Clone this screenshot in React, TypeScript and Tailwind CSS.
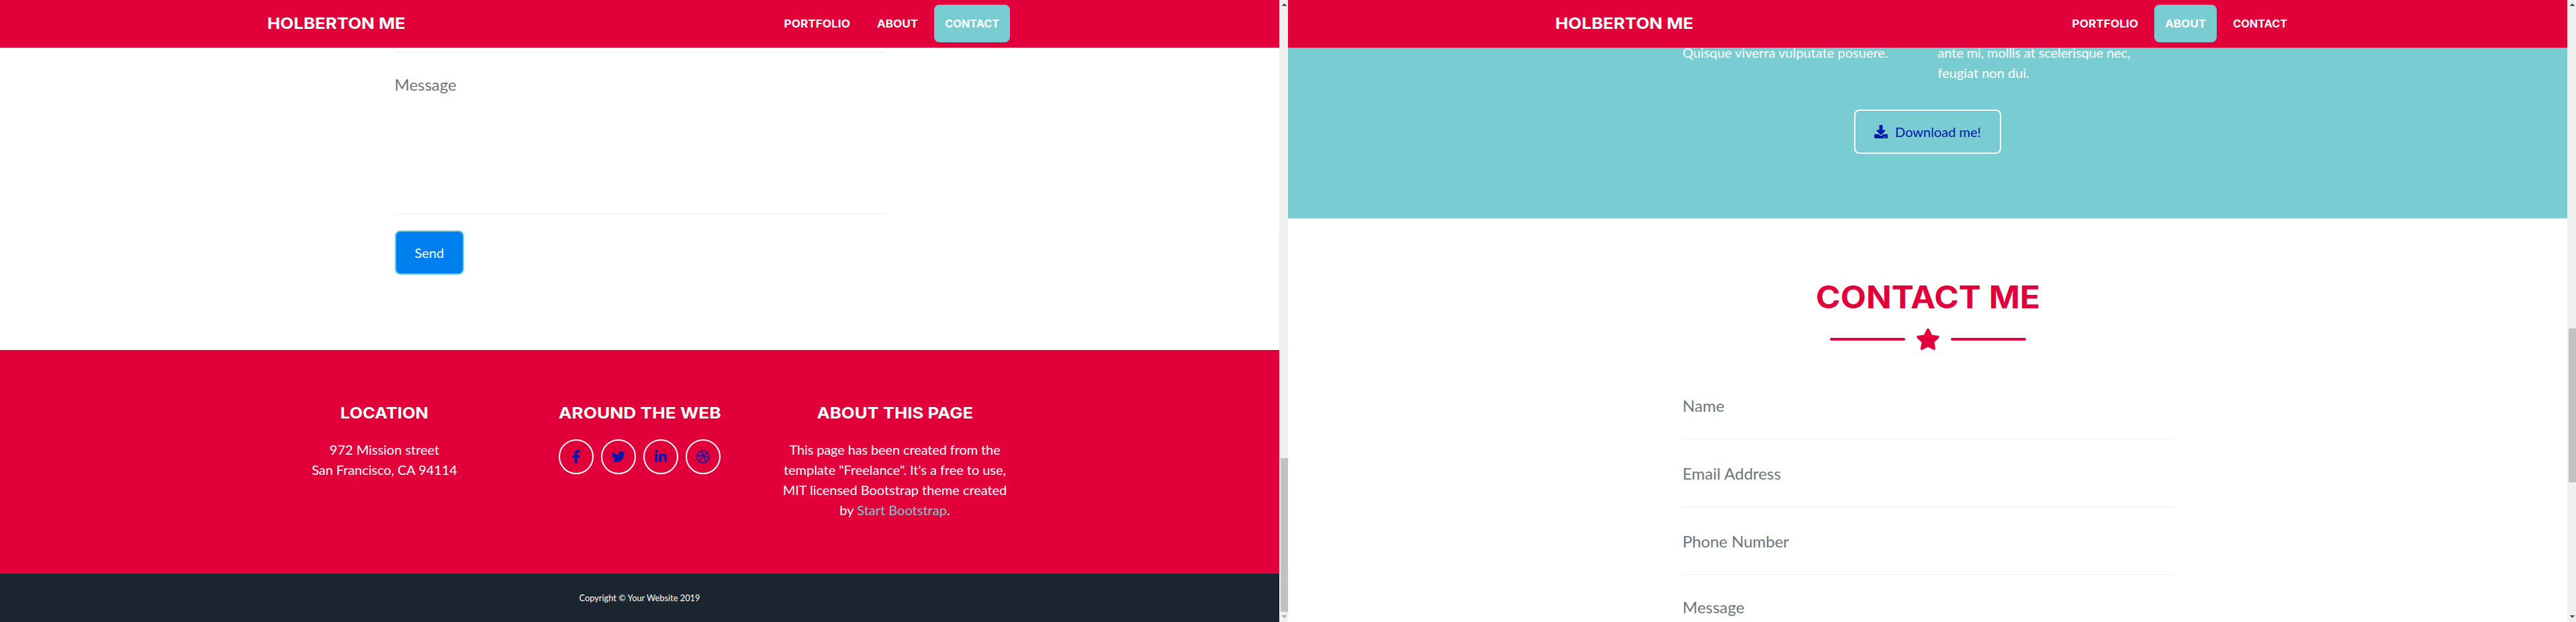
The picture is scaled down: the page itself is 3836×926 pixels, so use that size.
import type { ReactNode } from "react";
import { FaDownload, FaDribbble, FaFacebookF, FaLinkedinIn, FaStar, FaTwitter } from "react-icons/fa";

type Section = "PORTFOLIO" | "ABOUT" | "CONTACT";

const NAV: { label: Section; box: string; text: string }[] = [
  { label: "PORTFOLIO", box: "w-[130px]", text: "scale-x-[1.075]" },
  { label: "ABOUT", box: "w-[93px]", text: "scale-x-[1.07]" },
  { label: "CONTACT", box: "w-[112.5px]", text: "scale-x-[1.02]" },
];

const SOCIAL = [FaFacebookF, FaTwitter, FaLinkedinIn, FaDribbble];

function Header({ active }: { active: Section }) {
  return (
    <header className="h-[71px] shrink-0 bg-[#e1003a] text-white">
      <div className="mx-auto flex h-full w-[1110px] items-center justify-between pb-px font-[Inter,sans-serif] font-bold">
        <a className="origin-left scale-x-[1.125] whitespace-nowrap text-[23px] leading-8">HOLBERTON ME</a>
        <nav className="flex gap-2 pr-1">
          {NAV.map(({ label, box, text }) => (
            <a
              key={label}
              className={`flex h-14 items-center justify-center rounded-lg pb-px text-base ${box} ${
                label === active ? "bg-[#79cdd2]" : ""
              }`}
            >
              <span className={`inline-block ${text}`}>{label}</span>
            </a>
          ))}
        </nav>
      </div>
    </header>
  );
}

function Scrollbar({ thumb, atEnd }: { thumb: string; atEnd?: boolean }) {
  return (
    <div className="flex w-[13px] shrink-0 flex-col items-end bg-[#f0f0f0]">
      <svg className="mt-[5px] mr-[2px] h-1 w-[7px] shrink-0" viewBox="0 0 7 4" shapeRendering="crispEdges">
        <path d="M3 0h1v1h1v1h1v1h1v1H0V3h1V2h1V1h1z" fill="#505050" />
      </svg>
      <div className={`w-[11px] bg-[#c1c1c1] ${thumb}`} />
      <svg className="mt-auto mr-[2px] mb-[6px] h-1 w-[7px] shrink-0" viewBox="0 0 7 4" shapeRendering="crispEdges">
        <path d="M0 0h7v1H6v1H5v1H4v1H3V3H2V2H1V1H0z" fill={atEnd ? "#a3a3a3" : "#505050"} />
      </svg>
    </div>
  );
}

function Pane({ active, thumb, atEnd, children }: { active: Section; thumb: string; atEnd?: boolean; children: ReactNode }) {
  return (
    <div className="flex h-full w-[1918px] shrink-0">
      <div className="flex w-[1905px] shrink-0 flex-col overflow-hidden bg-white">
        <Header active={active} />
        {children}
      </div>
      <Scrollbar thumb={thumb} atEnd={atEnd} />
    </div>
  );
}

function Field({ label, size }: { label: string; size: string }) {
  return (
    <div className={`shrink-0 border-b border-[#e9ecef] text-2xl leading-9 text-[#6c757d] ${size}`}>{label}</div>
  );
}

function FooterColumn({ title, stretch, children }: { title: string; stretch: string; children: ReactNode }) {
  return (
    <div className="flex w-[380px] flex-col items-center px-[15px] text-center text-xl leading-[30px]">
      <h4 className={`mb-[25px] whitespace-nowrap font-[Inter,sans-serif] text-[23px] font-bold leading-7 ${stretch}`}>
        {title}
      </h4>
      {children}
    </div>
  );
}

function ContactPane() {
  return (
    <Pane active="CONTACT" thumb="mt-[673px] h-[229px]" atEnd>
      <main className="mx-auto flex h-[450px] w-[730px] shrink-0 flex-col items-start">
        <div className="h-[7px] w-full shrink-0 border-b border-[#e9ecef]" />
        <Field label="Message" size="h-[241px] w-full pt-[30px]" />
        <button className="mt-6 h-[66px] rounded-lg border-2 border-[#79cdd2] bg-[#0080ee] px-7 text-xl leading-[30px] text-white">
          Send
        </button>
      </main>
      <footer className="h-[333px] shrink-0 bg-[#e1003a] pt-20 text-white">
        <div className="mx-auto flex w-[1140px]">
          <FooterColumn title="LOCATION" stretch="scale-x-[1.105]">
            <p>
              <span className="tracking-[-0.03px]">972 Mission street</span>
              <br />
              <span className="tracking-[-0.07px]">San Francisco, CA 94114</span>
            </p>
          </FooterColumn>
          <FooterColumn title="AROUND THE WEB" stretch="scale-x-[1.145]">
            <div className="flex gap-[11px]">
              {SOCIAL.map((Icon, i) => (
                <a
                  key={i}
                  className="flex size-[52px] items-center justify-center rounded-full border-2 border-white text-[#0018ae]"
                >
                  <Icon className="size-5" />
                </a>
              ))}
            </div>
          </FooterColumn>
          <FooterColumn title="ABOUT THIS PAGE" stretch="scale-x-[1.12]">
            <p>
              <span className="tracking-[-0.12px]">This page has been created from the</span>
              <br />
              <span className="tracking-[-0.05px]">template "Freelance". It's a free to use,</span>
              <br />
              <span className="tracking-[-0.04px]">MIT licensed Bootstrap theme created</span>
              <br />
              by <a className="text-[#79cdd2]">Start Bootstrap</a>.
            </p>
          </FooterColumn>
        </div>
      </footer>
      <div className="flex h-[72px] shrink-0 items-center justify-center bg-[#1a252f] pt-px text-[12.8px] leading-[19px] text-white">
        Copyright © Your Website 2019
      </div>
    </Pane>
  );
}

function AboutPane() {
  return (
    <Pane active="ABOUT" thumb="mt-[480px] h-[229px]">
      <section className="flex h-[254px] shrink-0 flex-col items-center bg-[#79cdd2] text-xl leading-[30px] text-white">
        <div className="-mt-2 flex w-[730px] shrink-0">
          <p className="w-[380px]">Quisque viverra vulputate posuere.</p>
          <p className="w-[350px]">
            <span className="tracking-[-0.12px]">ante mi, mollis at scelerisque nec,</span>
            <br />
            feugiat non dui.
          </p>
        </div>
        <a className="mt-10 flex h-[66px] w-[219px] shrink-0 items-center justify-center gap-[11px] whitespace-nowrap rounded-lg border-2 border-white text-[#0018ae]">
          <FaDownload className="size-5" />
          Download me!
        </a>
      </section>
      <section className="flex grow flex-col items-center">
        <h2 className="mt-[89px] scale-x-[1.077] whitespace-nowrap font-[Inter,sans-serif] text-[46px] font-bold leading-[56px] text-[#e1003a]">
          CONTACT ME
        </h2>
        <div className="mt-[19px] flex items-center gap-4 text-[#e1003a]">
          <span className="h-1 w-28 rounded-full bg-[#e1003a]" />
          <FaStar className="h-8 w-9" />
          <span className="h-1 w-28 rounded-full bg-[#e1003a]" />
        </div>
        <div className="mt-8 flex w-[730px] flex-col">
          <Field label="Name" size="h-[101px] pt-[33px]" />
          <Field label="Email Address" size="h-[101px] pt-[33px]" />
          <Field label="Phone Number" size="h-[101px] pt-[33px] tracking-[-0.1px]" />
          <Field label="Message" size="h-[241px] pt-[30px]" />
        </div>
      </section>
    </Pane>
  );
}

export default function App() {
  return (
    <div className="flex h-[926px] w-[3836px] overflow-hidden bg-white font-[Lato,sans-serif]">
      <ContactPane />
      <AboutPane />
    </div>
  );
}
